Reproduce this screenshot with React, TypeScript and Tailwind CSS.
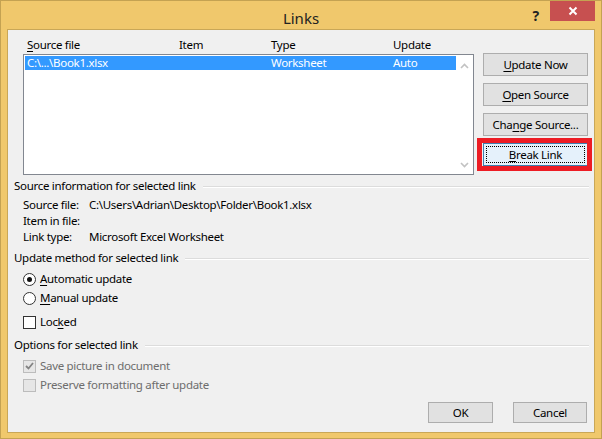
import React from "react";

const F = "font-['Segoe_UI','Noto_Sans',sans-serif] tracking-[-0.3px]";

function U({ children }: { children: React.ReactNode }) {
  return <span className="underline underline-offset-2 decoration-1">{children}</span>;
}

function Btn({ children, focused }: { children: React.ReactNode; focused?: boolean }) {
  if (focused) {
    return (
      <div className="relative w-[105px] h-[23px]">
        <div className="w-full h-full border border-[#3c7fb1] bg-[#e5f1fb] flex items-center justify-center p-[2px]">
          <div className="w-full h-full border border-dotted border-black flex items-center justify-center text-[11.5px] text-black leading-none">
            {children}
          </div>
        </div>
        <div className="absolute -left-[6px] -right-[4px] -top-[5px] -bottom-[5px] border-[5px] border-[#ed1c24]" />
      </div>
    );
  }
  return (
    <div className="w-[105px] h-[23px] border border-[#adadad] bg-[#e1e1e1] flex items-center justify-center text-[11.5px] text-black leading-none">
      {children}
    </div>
  );
}

function Heading({ children }: { children: React.ReactNode }) {
  return (
    <div className="flex items-center h-[16px] pr-[5px]">
      <span className="text-[11.5px] leading-[16px] text-black whitespace-nowrap">{children}</span>
      <div className="flex-1 ml-[7px] mt-[2px] border-t border-[#dcdcdc] border-b border-b-white" />
    </div>
  );
}

function Radio({ checked }: { checked?: boolean }) {
  return (
    <div className="w-[13px] h-[13px] rounded-full border border-[#333] bg-white flex items-center justify-center">
      {checked && <div className="w-[5px] h-[5px] rounded-full bg-[#111]" />}
    </div>
  );
}

function Chevron({ up }: { up?: boolean }) {
  return (
    <svg width="9" height="6" viewBox="0 0 9 6">
      <path
        d={up ? "M1 5 L4.5 1.5 L8 5" : "M1 1 L4.5 4.5 L8 1"}
        fill="none"
        stroke="#c2c2c2"
        strokeWidth="1.6"
      />
    </svg>
  );
}

export default function App() {
  return (
    <div className={`w-[602px] h-[439px] bg-[#f0c86c] border border-[#c4a252] flex flex-col ${F}`}>
      {/* title bar */}
      <div className="h-[28px] relative flex items-center justify-center">
        <span className="text-[15px] text-[#222] leading-none mt-[6px] tracking-normal">Links</span>
        <span className="absolute right-[62px] top-[8px] text-[14px] font-bold text-[#222] leading-none">?</span>
        <div className="absolute right-[6px] top-0 w-[45px] h-[20px] bg-[#c75050] flex items-center justify-center">
          <svg width="10" height="10" viewBox="0 0 10 10">
            <path d="M1.5 1.5 L8.5 8.5 M8.5 1.5 L1.5 8.5" stroke="white" strokeWidth="2" />
          </svg>
        </div>
      </div>

      {/* client */}
      <div className="mx-[6px] mb-[5px] flex-1 bg-[#f0f0f0] border border-[#c9a757] flex flex-col text-black">
        {/* top row */}
        <div className="flex pl-[15px] pt-[7px]">
          <div className="w-[451px] flex flex-col">
            <div className="h-[17px] relative text-[11.5px] leading-[16px]">
              <span className="absolute left-[4px] top-0"><U>S</U>ource file</span>
              <span className="absolute left-[156px] top-0">Item</span>
              <span className="absolute left-[248px] top-0">Type</span>
              <span className="absolute left-[370px] top-0">Update</span>
            </div>
            <div className="h-[121px] border border-[#828790] bg-white flex">
              <div className="flex-1 pt-[1px] pl-[1px]">
                <div className="h-[14px] bg-[#3399ff] text-white text-[11.5px] leading-[14px] flex">
                  <span className="w-[246px] pl-[2px]">C:\...\Book1.xlsx</span>
                  <span className="w-[122px]">Worksheet</span>
                  <span>Auto</span>
                </div>
              </div>
              <div className="w-[17px] bg-white flex flex-col items-center justify-between pt-[8px] pb-[6px]">
                <Chevron up />
                <Chevron />
              </div>
            </div>
          </div>
          <div className="ml-[9px] mt-[16px] flex flex-col gap-[7px]">
            <Btn><U>U</U>pdate Now</Btn>
            <Btn><U>O</U>pen Source</Btn>
            <Btn>Cha<U>n</U>ge Source...</Btn>
            <Btn focused><U>B</U>reak Link</Btn>
          </div>
        </div>

        {/* sections */}
        <div className="pl-[6px] mt-[3px] flex flex-col">
          <Heading>Source information for selected link</Heading>
          <div className="pl-[9px] mt-[3px] text-[11.5px] leading-[16px]">
            <div className="flex"><span className="w-[66px]">Source file:</span><span>C:\Users\Adrian\Desktop\Folder\Book1.xlsx</span></div>
            <div className="flex"><span className="w-[66px]">Item in file:</span><span></span></div>
            <div className="flex"><span className="w-[66px]">Link type:</span><span>Microsoft Excel Worksheet</span></div>
          </div>

          <div className="mt-[5px]">
            <Heading>Update method for selected link</Heading>
          </div>
          <div className="pl-[9px] mt-[5px] text-[11.5px] leading-[16px] flex flex-col gap-[3px]">
            <div className="flex items-center gap-[4px]"><Radio checked /><span><U>A</U>utomatic update</span></div>
            <div className="flex items-center gap-[4px]"><Radio /><span><U>M</U>anual update</span></div>
          </div>
          <div className="pl-[9px] mt-[8px] text-[11.5px] leading-[16px] flex items-center gap-[4px]">
            <div className="w-[13px] h-[13px] border border-[#333] bg-white" />
            <span>Loc<U>k</U>ed</span>
          </div>

          <div className="mt-[7px]">
            <Heading>Options for selected link</Heading>
          </div>
          <div className="pl-[9px] mt-[5px] text-[11.5px] leading-[16px] flex flex-col gap-[3px] text-[#6d6d6d]">
            <div className="flex items-center gap-[4px]">
              <div className="w-[13px] h-[13px] border border-[#bcbcbc] bg-[#e6e6e6] flex items-center justify-center">
                <svg width="9" height="8" viewBox="0 0 9 8">
                  <path d="M1 4 L3.5 6.5 L8 1" fill="none" stroke="#838383" strokeWidth="1.8" />
                </svg>
              </div>
              <span>Save picture in document</span>
            </div>
            <div className="flex items-center gap-[4px]">
              <div className="w-[13px] h-[13px] border border-[#bcbcbc] bg-[#e6e6e6]" />
              <span>Preserve formatting after update</span>
            </div>
          </div>
        </div>

        <div className="flex-1" />
        <div className="flex justify-end gap-[20px] pr-[7px] pb-[9px]">
          <div className="w-[65px] h-[21px] border border-[#adadad] bg-[#e1e1e1] flex items-center justify-center text-[11.5px] leading-none">OK</div>
          <div className="w-[74px] h-[21px] border border-[#adadad] bg-[#e1e1e1] flex items-center justify-center text-[11.5px] leading-none">Cancel</div>
        </div>
      </div>
    </div>
  );
}
